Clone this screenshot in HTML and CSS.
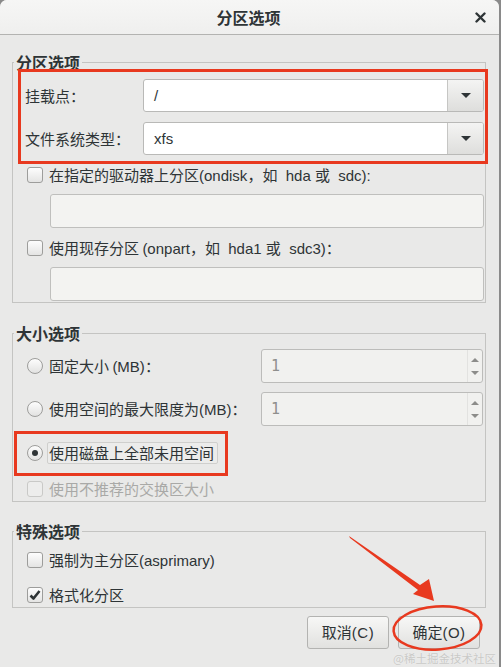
FILE: index.html
```html
<!DOCTYPE html>
<html lang="zh-CN">
<head>
<meta charset="utf-8">
<title>分区选项</title>
<link rel="stylesheet" href="styles.css">
</head>
<body>
<div class="window">
  <header class="titlebar">
    <div class="title">分区选项</div>
    <div class="close"><svg width="11" height="11" viewBox="0 0 11 11"><path d="M1.5 1.5 L9.5 9.5 M9.5 1.5 L1.5 9.5" stroke="#2e3436" stroke-width="2.4" stroke-linecap="round"/></svg></div>
  </header>
  <main class="content">
    <fieldset class="frame frame-part">
      <legend>分区选项</legend>
      <div class="combo-grid">
        <div class="lbl">挂载点<span class="fw">：</span></div>
        <div class="combo"><span class="combo-text"><span class="lat">/</span></span><span class="combo-btn"><i class="tri-down"></i></span></div>
        <div class="lbl">文件系统类型<span class="fw">：</span></div>
        <div class="combo"><span class="combo-text"><span class="lat">xfs</span></span><span class="combo-btn"><i class="tri-down"></i></span></div>
      </div>
      <div class="check-row first"><span class="checkbox"></span><span>在指定的驱动器上分区<span class="lat">(ondisk</span>，如<span class="lat">&nbsp;&nbsp;hda </span>或<span class="lat">&nbsp;&nbsp;sdc):</span></span></div>
      <div class="entry"></div>
      <div class="check-row"><span class="checkbox"></span><span>使用现存分区 <span class="lat">(onpart</span>，如<span class="lat">&nbsp;&nbsp;hda1 </span>或<span class="lat">&nbsp;&nbsp;sdc3)</span><span class="fw">：</span></span></div>
      <div class="entry"></div>
    </fieldset>

    <fieldset class="frame frame-size">
      <legend>大小选项</legend>
      <div class="radio-row spin-row first">
        <span class="radio"></span><span class="grow">固定大小 <span class="lat">(MB)</span><span class="fw">：</span></span>
        <div class="spin"><span class="spin-text">1</span><span class="spin-btns"><i class="tri-up small"></i><i class="tri-down small"></i></span></div>
      </div>
      <div class="radio-row spin-row second">
        <span class="radio"></span><span class="grow">使用空间的最大限度为<span class="lat">(MB)</span><span class="fw">：</span></span>
        <div class="spin"><span class="spin-text">1</span><span class="spin-btns"><i class="tri-up small"></i><i class="tri-down small"></i></span></div>
      </div>
      <div class="radio-row fill-row">
        <span class="radio checked"></span><span class="focus-label">使用磁盘上全部未用空间</span>
      </div>
      <div class="check-row disabled-row"><span class="checkbox disabled"></span><span>使用不推荐的交换区大小</span></div>
    </fieldset>

    <fieldset class="frame frame-special">
      <legend>特殊选项</legend>
      <div class="check-row first"><span class="checkbox"></span><span>强制为主分区<span class="lat">(asprimary)</span></span></div>
      <div class="check-row second"><span class="checkbox checked"><svg width="14" height="14" viewBox="0 0 14 14"><path d="M2.5 7.5 L5.5 10.5 L11.5 3" fill="none" stroke="#2e3436" stroke-width="2.6" stroke-linejoin="round"/></svg></span><span>格式化分区</span></div>
    </fieldset>

    <div class="buttons">
      <button class="btn">取消<span class="lat">(C)</span></button>
      <button class="btn">确定<span class="lat">(O)</span></button>
    </div>
  </main>

  <div class="anno-rect anno-top"></div>
  <div class="anno-rect anno-mid"></div>
  <svg class="anno-svg" viewBox="0 0 499 667" width="499" height="667">
    <polygon points="349,536 420,585 429,579 434,601 413,594 418,590 350,538" fill="#e8391f"/>
    <ellipse cx="437.5" cy="628" rx="44" ry="21.5" fill="none" stroke="#e8391f" stroke-width="2.5" transform="rotate(-4 437.5 628)"/>
  </svg>
  <div class="watermark">@稀土掘金技术社区</div>
</div>
</body>
</html>
```

FILE: styles.css
```css
* { box-sizing: border-box; }

html, body {
  margin: 0;
  padding: 0;
}

body {
  background: #8a8a8a;
  width: 501px;
  height: 667px;
  overflow: hidden;
  font-family: "Noto Sans CJK SC", "DejaVu Sans", sans-serif;
  font-size: 15px;
  line-height: 20px;
  color: #2e3436;
}

.lat {
  font-family: "Liberation Sans", "DejaVu Sans", sans-serif;
  font-size: 15px;
}

.fw {
  font-family: "Noto Sans CJK TC", "Noto Sans CJK SC", sans-serif;
}

.window {
  position: relative;
  width: 499px;
  height: 667px;
  background: #e9e9e8;
  border-radius: 7px 7px 0 0;
  overflow: hidden;
}

.titlebar {
  height: 35px;
  display: flex;
  align-items: center;
  justify-content: center;
  position: relative;
  background: linear-gradient(#f6f6f5, #efefee);
  border-bottom: 1px solid #b3b3b1;
}

.title {
  font-weight: bold;
  font-size: 16px;
  line-height: 20px;
  margin-left: -2px;
}

.close {
  position: absolute;
  right: 13px;
  top: 12px;
  width: 11px;
  height: 11px;
  display: flex;
}

.content {
  padding: 0 13px 0 12px;
  display: flex;
  flex-direction: column;
}

.frame {
  margin: 0;
  padding: 0 1px 0 0;
  border: 1px solid #c4c4c2;
  min-width: 0;
  display: flex;
  flex-direction: column;
}

.frame legend {
  font-weight: bold;
  font-size: 16px;
  line-height: 18px;
  padding: 0 2px;
  margin-left: 1px;
}

.frame-part { margin-top: 18px; padding-bottom: 1px; }
.frame-size { margin-top: 21px; padding-bottom: 2px; }
.frame-special { margin-top: 20px; padding-bottom: 0; }

/* combos */
.combo-grid {
  margin: 8px 0 0 12px;
  display: grid;
  grid-template-columns: 118px 1fr;
  grid-auto-rows: 33px;
  row-gap: 10px;
  align-items: center;
}

.combo {
  height: 33px;
  display: flex;
  background: #ffffff;
  border: 1px solid #b9b9b7;
  border-radius: 3px;
  overflow: hidden;
}

.combo-text {
  flex: 1;
  padding-left: 10px;
  display: flex;
  align-items: center;
}

.combo-btn {
  width: 36px;
  border-left: 1px solid #c6c6c4;
  background: linear-gradient(#f4f4f3, #dededc);
  display: flex;
  align-items: center;
  justify-content: center;
}

.tri-down {
  width: 0; height: 0;
  border-left: 5px solid transparent;
  border-right: 5px solid transparent;
  border-top: 5px solid #2e3436;
}

.tri-up {
  width: 0; height: 0;
  border-left: 5px solid transparent;
  border-right: 5px solid transparent;
  border-bottom: 5px solid #2e3436;
}

.tri-down.small { border-left-width: 4px; border-right-width: 4px; border-top: 4px solid #8c8c8a; }
.tri-up.small { border-left-width: 4px; border-right-width: 4px; border-bottom: 4px solid #8c8c8a; }

/* check rows */
.check-row, .radio-row {
  display: flex;
  align-items: center;
  gap: 6px;
  padding-left: 14px;
  height: 24px;
  white-space: nowrap;
}

.frame-part .check-row { margin-top: 8px; }

.checkbox {
  width: 16px;
  height: 16px;
  flex: none;
  border: 1px solid #9d9d9b;
  border-radius: 3px;
  background: linear-gradient(#fdfdfd, #e4e4e3);
  display: flex;
  align-items: center;
  justify-content: center;
}

.checkbox.disabled {
  border-color: #c9c9c7;
  background: #ededec;
}

.radio {
  width: 16px;
  height: 16px;
  flex: none;
  border: 1px solid #9d9d9b;
  border-radius: 50%;
  background: linear-gradient(#fdfdfd, #e2e2e1);
  display: flex;
  align-items: center;
  justify-content: center;
}

.radio.checked::after {
  content: "";
  width: 6px;
  height: 6px;
  border-radius: 50%;
  background: #2e3436;
}

.entry {
  margin: 7px 0 0 37px;
  height: 34px;
  background: #f3f3f1;
  border: 1px solid #bfbfbd;
  border-radius: 3px;
}

/* size options */
.spin-row { height: 34px; padding-right: 1px; }
.spin-row.first { margin-top: 7px; }
.spin-row.second { margin-top: 9px; }
.grow { flex: 1; }

.spin {
  width: 222px;
  height: 34px;
  display: flex;
  background: #f1f1ef;
  border: 1px solid #bcbcba;
  border-radius: 3px;
  overflow: hidden;
}

.spin-text {
  flex: 1;
  padding-left: 9px;
  display: flex;
  align-items: center;
  color: #8f8f8d;
  font-family: "DejaVu Sans Mono", monospace;
  font-size: 15px;
}

.spin-btns {
  width: 15px;
  border-left: 1px solid #e2e2e0;
  display: flex;
  flex-direction: column;
  align-items: center;
  justify-content: space-around;
  padding: 3px 0;
}

.fill-row {
  margin-top: 16px;
  height: 22px;
  gap: 4px;
}

.focus-label {
  height: 22px;
  display: flex;
  align-items: center;
  padding: 0 3px 0 1px;
  border: 1px solid #cfcfcd;
  border-radius: 2px;
  background: #ececeb;
}

.disabled-row {
  margin-top: 15px;
  height: 20px;
  color: #a9a9a7;
}

.frame-special .check-row.first { margin-top: 8px; }
.frame-special .check-row.second { margin-top: 11px; }

/* buttons */
.buttons {
  margin-top: 8px;
  padding-right: 6px;
  display: flex;
  justify-content: flex-end;
  gap: 9px;
}

.btn {
  width: 82px;
  height: 33px;
  font-family: "Noto Sans CJK SC", "DejaVu Sans", sans-serif;
  font-size: 15px;
  line-height: 20px;
  color: #2e3436;
  background: linear-gradient(#f7f7f6, #e1e1df);
  border: 1px solid #b3b3b1;
  border-radius: 3px;
  padding: 0;
}

.btn .lat { letter-spacing: 0.5px; }

/* annotations */
.anno-rect {
  position: absolute;
  border: 3px solid #e8391f;
  pointer-events: none;
}

.anno-top { left: 18px; top: 69px; width: 470px; height: 95px; }
.anno-mid { left: 14px; top: 431px; width: 214px; height: 45px; }

.anno-svg {
  position: absolute;
  left: 0;
  top: 0;
  pointer-events: none;
}

.watermark {
  position: absolute;
  right: 3px;
  bottom: 1px;
  font-family: "Noto Sans CJK SC", sans-serif;
  font-size: 11.5px;
  line-height: 16px;
  color: #c9c9c7;
  text-shadow: 0 0 1px #f6f6f6;
}
```
